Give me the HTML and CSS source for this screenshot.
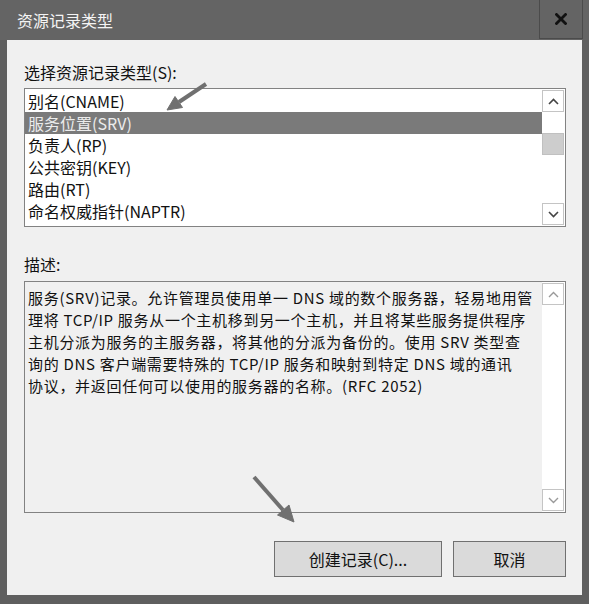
FILE: index.html
```html
<!DOCTYPE html>
<html lang="zh-CN">
<head>
<meta charset="utf-8">
<title>资源记录类型</title>
<link rel="stylesheet" href="styles.css">
</head>
<body>
<div class="window">
  <div class="titlebar">
    <span class="title">资源记录类型</span>
    <div class="close">
      <svg width="12" height="12" viewBox="0 0 12 12"><path d="M1.5 1.5 L10.5 10.5 M10.5 1.5 L1.5 10.5" stroke="#111" stroke-width="2.8" stroke-linecap="square"/></svg>
    </div>
  </div>
  <div class="client">
    <div class="label">选择资源记录类型(S):</div>
    <div class="listbox">
      <div class="items">
        <div class="row">别名(CNAME)</div>
        <div class="row selected">服务位置(SRV)</div>
        <div class="row">负责人(RP)</div>
        <div class="row">公共密钥(KEY)</div>
        <div class="row">路由(RT)</div>
        <div class="row">命名权威指针(NAPTR)</div>
      </div>
      <div class="scrollbar">
        <div class="sbtn"><svg width="11" height="7" viewBox="0 0 11 7"><path d="M1 6 L5.5 1.5 L10 6" fill="none" stroke="#444" stroke-width="1.6"/></svg></div>
        <div class="gap1"></div>
        <div class="thumb"></div>
        <div class="fill"></div>
        <div class="sbtn"><svg width="11" height="7" viewBox="0 0 11 7"><path d="M1 1 L5.5 5.5 L10 1" fill="none" stroke="#444" stroke-width="1.6"/></svg></div>
      </div>
    </div>
    <div class="label desc-label">描述:</div>
    <div class="descbox">
      <div class="desc">
        <div class="line">服务(SRV)记录。允许管理员使用单一 DNS 域的数个服务器，轻易地用管</div>
        <div class="line">理将 TCP/IP 服务从一个主机移到另一个主机，并且将某些服务提供程序</div>
        <div class="line">主机分派为服务的主服务器，将其他的分派为备份的。使用 SRV 类型查</div>
        <div class="line">询的 DNS 客户端需要特殊的 TCP/IP 服务和映射到特定 DNS 域的通讯</div>
        <div class="line">协议，并返回任何可以使用的服务器的名称。(RFC 2052)</div>
      </div>
      <div class="scrollbar desc-sb">
        <div class="sbtn"><svg width="11" height="7" viewBox="0 0 11 7"><path d="M1 6 L5.5 1.5 L10 6" fill="none" stroke="#999" stroke-width="1.4"/></svg></div>
        <div class="fill"></div>
        <div class="sbtn"><svg width="11" height="7" viewBox="0 0 11 7"><path d="M1 1 L5.5 5.5 L10 1" fill="none" stroke="#999" stroke-width="1.4"/></svg></div>
      </div>
    </div>
    <div class="buttons">
      <button class="btn create">创建记录(C)...</button>
      <button class="btn cancel">取消</button>
    </div>
  </div>
</div>
<svg class="annot" width="603" height="607" viewBox="0 0 603 607">
  <g fill="#707070" stroke="#707070">
    <line x1="206" y1="84" x2="179" y2="102" stroke-width="4"/>
    <polygon points="167,110 182.5,107.5 175,96.5" stroke-width="1"/>
    <line x1="254" y1="477" x2="283" y2="510" stroke-width="4"/>
    <polygon points="294,522 289,505 277.5,515" stroke-width="1"/>
  </g>
</svg>
</body>
</html>
```

FILE: styles.css
```css
html, body {
  margin: 0;
  padding: 0;
  background: #ffffff;
}
body {
  width: 603px;
  height: 607px;
  position: relative;
  overflow: hidden;
  font-family: "Noto Sans CJK SC", "Liberation Sans", sans-serif;
  color: #111;
}
.window {
  width: 589px;
  height: 604px;
  background: #5f5f5f;
  display: flex;
  flex-direction: column;
}
.titlebar {
  height: 40px;
  display: flex;
  align-items: center;
  background: #646464;
}
.title {
  flex: 1;
  margin-left: 17px;
  color: #f4f4f4;
  font-size: 16px;
}
.close {
  width: 44px;
  height: 39px;
  margin-right: 6px;
  align-self: flex-start;
  box-sizing: border-box;
  border: 1px solid #4b4b4b;
  border-top: none;
  display: flex;
  align-items: center;
  justify-content: center;
}
.client {
  flex: 1;
  margin: 0 7px 9px 7px;
  background: #f0f0f0;
  padding: 22px 16px 0 17px;
  display: flex;
  flex-direction: column;
}
.label {
  font-size: 16px;
  line-height: 20px;
  height: 20px;
}
.listbox {
  margin-top: 6px;
  height: 139px;
  box-sizing: border-box;
  border: 1px solid #828282;
  background: #fff;
  display: flex;
}
.items {
  flex: 1;
  padding-top: 1px;
}
.row {
  height: 22px;
  line-height: 22px;
  font-size: 16px;
  padding-left: 3px;
  white-space: nowrap;
}
.row.selected {
  background: #7a7a7a;
  color: #ececec;
}
.scrollbar {
  width: 23px;
  box-sizing: border-box;
  padding: 1px 1px 1px 0;
  display: flex;
  flex-direction: column;
  background: #fff;
}
.sbtn {
  height: 22px;
  box-sizing: border-box;
  border: 1px solid #c4c4c4;
  display: flex;
  align-items: center;
  justify-content: center;
  background: #fff;
}
.gap1 {
  height: 21px;
}
.thumb {
  height: 22px;
  background: #cdcdcd;
  border: 1px solid #c0c0c0;
  box-sizing: border-box;
}
.fill {
  flex: 1;
}
.desc-label {
  margin-top: 27px;
}
.descbox {
  margin-top: 7px;
  height: 232px;
  box-sizing: border-box;
  border: 1px solid #828282;
  background: #f0f0f0;
  display: flex;
}
.desc {
  flex: 1;
  min-width: 0;
  padding: 5px 0 0 3px;
  font-size: 15px;
  letter-spacing: 0.7px;
}
.line {
  line-height: 22px;
  white-space: nowrap;
}
.desc-sb {
  padding-top: 1px;
  padding-bottom: 1px;
}
.buttons {
  margin-top: 28px;
  display: flex;
  justify-content: flex-end;
  gap: 11px;
}
.btn {
  height: 36px;
  box-sizing: border-box;
  border: 1px solid #707070;
  background: #dadada;
  font-family: "Noto Sans CJK SC", "Liberation Sans", sans-serif;
  font-size: 16px;
  color: #111;
  padding: 0;
}
.create {
  width: 168px;
}
.cancel {
  width: 113px;
}
.annot {
  position: absolute;
  left: 0;
  top: 0;
  pointer-events: none;
}
```
